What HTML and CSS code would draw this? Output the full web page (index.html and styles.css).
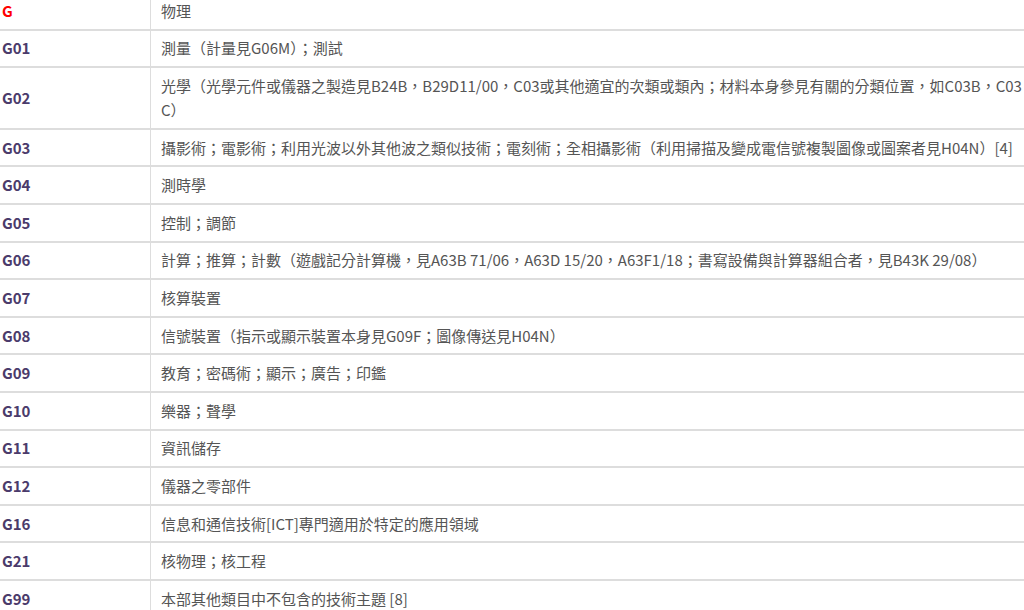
FILE: index.html
```html
<!DOCTYPE html>
<html lang="zh-Hant">
<head>
<meta charset="utf-8">
<link rel="stylesheet" href="styles.css">
</head>
<body>
<table class="ipc">
<tbody>
<tr><td class="code top">G</td><td class="desc">物理</td></tr>
<tr><td class="code">G01</td><td class="desc">測量（計量見G06M）；測試</td></tr>
<tr><td class="code">G02</td><td class="desc">光學（光學元件或儀器之製造見B24B，B29D11/00，C03或其他適宜的次類或類內；材料本身參見有關的分類位置，如C03B，C03C）</td></tr>
<tr><td class="code">G03</td><td class="desc">攝影術；電影術；利用光波以外其他波之類似技術；電刻術；全相攝影術（利用掃描及變成電信號複製圖像或圖案者見H04N）[4]</td></tr>
<tr><td class="code">G04</td><td class="desc">測時學</td></tr>
<tr><td class="code">G05</td><td class="desc">控制；調節</td></tr>
<tr><td class="code">G06</td><td class="desc">計算；推算；計數（遊戲記分計算機，見A63B 71/06，A63D 15/20，A63F1/18；書寫設備與計算器組合者，見B43K 29/08）</td></tr>
<tr><td class="code">G07</td><td class="desc">核算裝置</td></tr>
<tr><td class="code">G08</td><td class="desc">信號裝置（指示或顯示裝置本身見G09F；圖像傳送見H04N）</td></tr>
<tr><td class="code">G09</td><td class="desc">教育；密碼術；顯示；廣告；印鑑</td></tr>
<tr><td class="code">G10</td><td class="desc">樂器；聲學</td></tr>
<tr><td class="code">G11</td><td class="desc">資訊儲存</td></tr>
<tr><td class="code">G12</td><td class="desc">儀器之零部件</td></tr>
<tr><td class="code">G16</td><td class="desc">信息和通信技術[ICT]專門適用於特定的應用領域</td></tr>
<tr><td class="code">G21</td><td class="desc">核物理；核工程</td></tr>
<tr><td class="code">G99</td><td class="desc">本部其他類目中不包含的技術主題 [8]</td></tr>
</tbody>
</table>
</body>
</html>
```
FILE: styles.css
```css
html, body {
  margin: 0;
  padding: 0;
  background: #ffffff;
  overflow: hidden;
}
body {
  font-family: "Noto Sans CJK TC", "Noto Sans", sans-serif;
  font-size: 15px;
  line-height: 24px;
  color: #555555;
}
.ipc {
  width: 1024px;
  border-collapse: collapse;
  margin-top: -7px;
}
.ipc td {
  border-top: 2px solid #dddddd;
  padding: 5.8px 0 5.8px 10px;
  vertical-align: middle;
}
.ipc tr:first-child td {
  border-top: none;
}
.ipc td.desc {
  word-break: break-all;
}
.ipc td.code {
  width: 138px;
  padding-left: 2px;
  padding-right: 10px;
  font-weight: bold;
  color: #4b3b6b;
  border-right: 1px solid #dddddd;
}
.ipc td.code.top {
  color: #ff0000;
}
```
